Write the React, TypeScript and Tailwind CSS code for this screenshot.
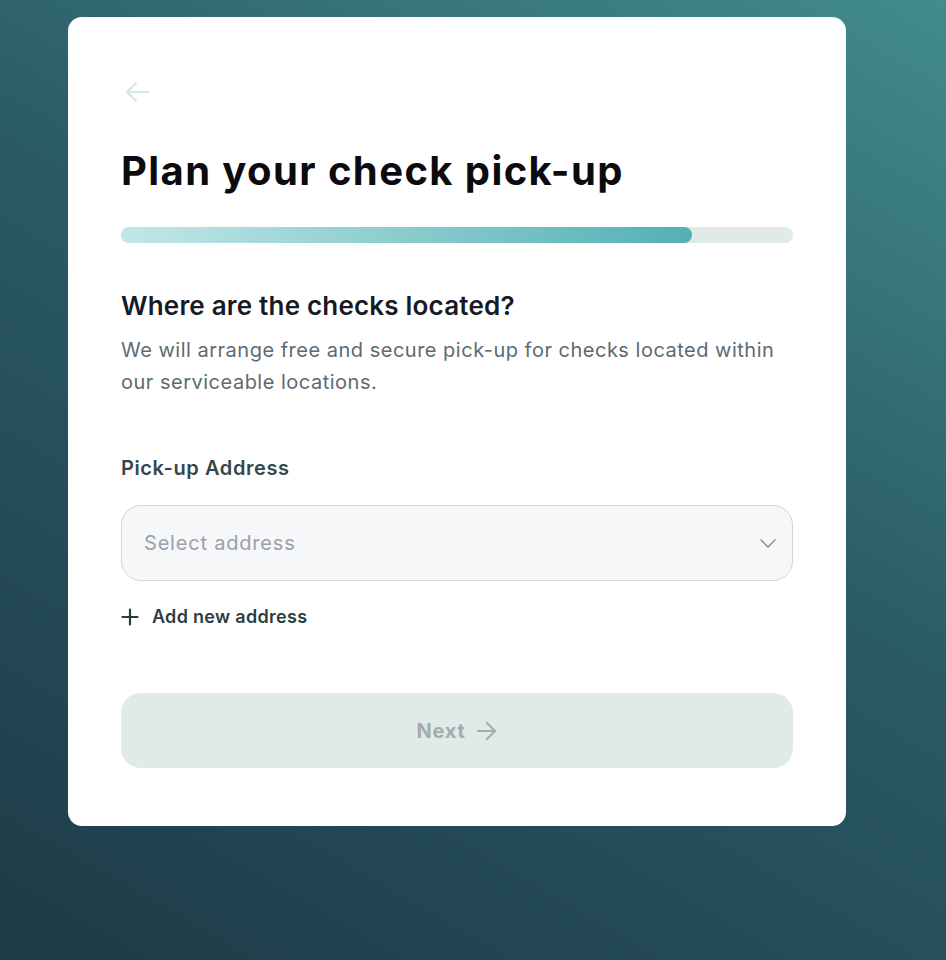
import React from "react";

export default function App() {
  return (
    <div
      className="min-h-[960px] w-full bg-[linear-gradient(30deg,#1d3a46_0%,#2a5a66_55%,#428b8f_100%)] pt-[17px]"
      style={{ fontFamily: "Inter, 'Noto Sans', sans-serif" }}
    >
      <div className="ml-[68px] w-[778px] h-[809px] rounded-[14px] bg-white px-[53px] pt-[64px]">
        <button className="ml-[3px] flex h-[22px] w-[30px] items-center text-[#d5e7e7]">
          <svg width="26" height="22" viewBox="0 0 26 22" fill="none" stroke="currentColor" strokeWidth="2.2" strokeLinecap="round" strokeLinejoin="round">
            <path d="M24 11H4" />
            <path d="M12 2L3 11l9 9" />
          </svg>
        </button>
        <h1 className="mt-[44px] text-[40px] leading-[48px] font-bold tracking-[1.4px] text-[#0b0b0f]">
          Plan your check pick-up
        </h1>
        <div className="mt-[32px] h-[16px] w-full rounded-full bg-[#e0eae9]">
          <div className="h-full w-[85%] rounded-full bg-[linear-gradient(90deg,#c2e7e7,#53b0b4)]" />
        </div>
        <h2 className="mt-[47px] text-[26px] leading-[32px] font-semibold tracking-[0.2px] text-[#161a26]">
          Where are the checks located?
        </h2>
        <p className="mt-[12px] text-[20px] leading-[32px] tracking-[0.5px] text-[#5d6a72]">
          We will arrange free and secure pick-up for checks located within our serviceable locations.
        </p>
        <div className="mt-[56px] text-[20px] leading-[28px] font-semibold tracking-[0.6px] text-[#36474c]">
          Pick-up Address
        </div>
        <div className="mt-[23px] flex h-[76px] items-center justify-between rounded-[20px] border border-[#d3d4de] bg-[#f6f7f9] pl-[22px] pr-[14px]">
          <span className="text-[20px] tracking-[0.8px] text-[#9aa0aa]">Select address</span>
          <svg width="20" height="20" viewBox="0 0 20 20" fill="none" stroke="#7d8590" strokeWidth="1.3" strokeLinecap="round" strokeLinejoin="round">
            <path d="M3 7l7 7 7-7" />
          </svg>
        </div>
        <button className="mt-[24px] flex items-center gap-[13px] text-[#2c3d42]">
          <svg width="18" height="18" viewBox="0 0 18 18" fill="none" stroke="currentColor" strokeWidth="2.2" strokeLinecap="round">
            <path d="M9 1.5v15M1.5 9h15" />
          </svg>
          <span className="text-[18px] leading-[24px] font-semibold tracking-[0.3px]">Add new address</span>
        </button>
        <button className="mt-[64px] flex h-[75px] w-full items-center justify-center gap-[10px] rounded-[20px] bg-[#e0eae9] text-[#a3adac]">
          <span className="text-[20px] font-bold tracking-[0.8px]">Next</span>
          <svg width="22" height="22" viewBox="0 0 22 22" fill="none" stroke="currentColor" strokeWidth="2.2" strokeLinecap="round" strokeLinejoin="round">
            <path d="M2 11h17" />
            <path d="M11 3l8 8-8 8" />
          </svg>
        </button>
      </div>
    </div>
  );
}
